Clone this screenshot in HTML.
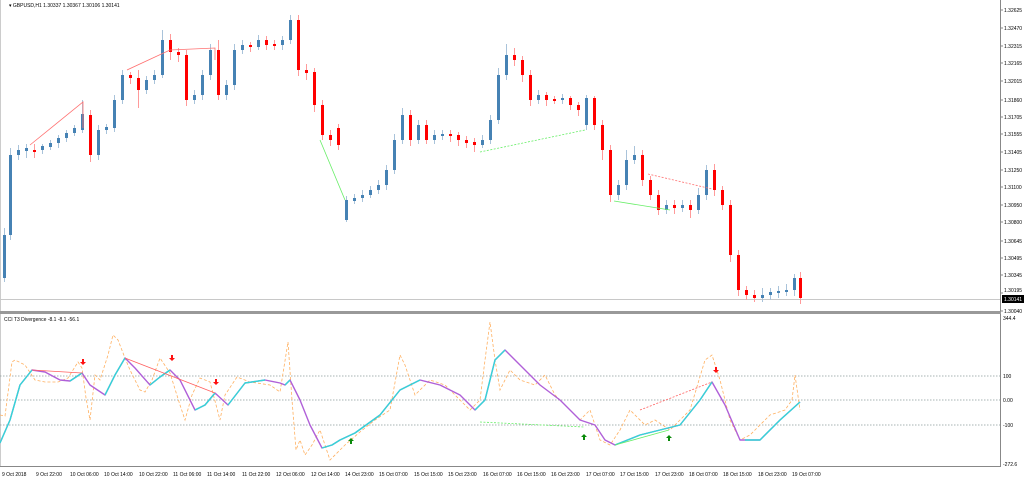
<!DOCTYPE html>
<html><head><meta charset="utf-8"><style>
html,body{margin:0;padding:0;background:#fff;width:1024px;height:480px;overflow:hidden}
svg text{font-family:"Liberation Sans",sans-serif;font-size:5px;fill:#000}
</style></head><body>
<svg width="1024" height="480" xmlns="http://www.w3.org/2000/svg">
<defs><clipPath id="ind"><rect x="0" y="315" width="1000" height="151"/></clipPath></defs>
<rect x="0" y="0" width="1024" height="480" fill="#fff"/>
<line x1="1000.5" y1="0" x2="1000.5" y2="466" stroke="#888"/>
<line x1="0.5" y1="0" x2="0.5" y2="466" stroke="#ccc"/>
<rect x="0" y="311" width="1001" height="3" fill="#999"/>
<line x1="0" y1="466.5" x2="1001" y2="466.5" stroke="#888"/>
<line x1="0" y1="299.5" x2="1000" y2="299.5" stroke="#c8c8c8"/>
<text x="9" y="7" style="font-size:5px">▾ GBPUSD,H1  1.30337 1.30367 1.30106 1.30141</text>
<text x="4" y="321" style="font-size:5px">CCI T3 Divergence -8.1 -8.1 -56.1</text>
<g stroke="#888">
<line x1="1000" y1="10" x2="1003" y2="10"/><line x1="1000" y1="28" x2="1003" y2="28"/><line x1="1000" y1="46" x2="1003" y2="46"/><line x1="1000" y1="63" x2="1003" y2="63"/><line x1="1000" y1="81" x2="1003" y2="81"/><line x1="1000" y1="100" x2="1003" y2="100"/><line x1="1000" y1="117" x2="1003" y2="117"/><line x1="1000" y1="134" x2="1003" y2="134"/><line x1="1000" y1="152" x2="1003" y2="152"/><line x1="1000" y1="170" x2="1003" y2="170"/><line x1="1000" y1="187" x2="1003" y2="187"/><line x1="1000" y1="205" x2="1003" y2="205"/><line x1="1000" y1="222" x2="1003" y2="222"/><line x1="1000" y1="241" x2="1003" y2="241"/><line x1="1000" y1="258" x2="1003" y2="258"/><line x1="1000" y1="275" x2="1003" y2="275"/><line x1="1000" y1="293" x2="1003" y2="293"/><line x1="1000" y1="311" x2="1003" y2="311"/>
</g>
<text x="1004" y="12">1.32625</text><text x="1004" y="30">1.32470</text><text x="1004" y="48">1.32315</text><text x="1004" y="65">1.32165</text><text x="1004" y="83">1.32015</text><text x="1004" y="102">1.31860</text><text x="1004" y="119">1.31705</text><text x="1004" y="136">1.31555</text><text x="1004" y="154">1.31405</text><text x="1004" y="172">1.31250</text><text x="1004" y="189">1.31100</text><text x="1004" y="207">1.30950</text><text x="1004" y="224">1.30800</text><text x="1004" y="243">1.30645</text><text x="1004" y="260">1.30495</text><text x="1004" y="277">1.30345</text><text x="1004" y="292">1.30195</text><text x="1004" y="313">1.30040</text>
<rect x="1002" y="295" width="22" height="8" fill="#000"/><text x="1004" y="301" style="fill:#fff">1.30141</text>
<g stroke="#8a9a9a" stroke-dasharray="1.5,1.5" stroke-width="0.8">
<line x1="0" y1="376" x2="1000" y2="376"/><line x1="0" y1="400" x2="1000" y2="400"/><line x1="0" y1="425" x2="1000" y2="425"/></g>
<text x="1003" y="378">100</text><text x="1003" y="402">0.00</text><text x="1003" y="427">-100</text><text x="1003" y="320">344.4</text><text x="1003" y="466">-272.6</text>
<g style="font-size:4.6px">
<text x="2" y="476">9 Oct 2018</text><text x="36" y="476">9 Oct 22:00</text><text x="70" y="476">10 Oct 06:00</text><text x="104" y="476">10 Oct 14:00</text><text x="139" y="476">10 Oct 22:00</text><text x="173" y="476">11 Oct 06:00</text><text x="207" y="476">11 Oct 14:00</text><text x="242" y="476">11 Oct 22:00</text><text x="276" y="476">12 Oct 06:00</text><text x="311" y="476">12 Oct 14:00</text><text x="345" y="476">14 Oct 23:00</text><text x="379" y="476">15 Oct 07:00</text><text x="414" y="476">15 Oct 15:00</text><text x="448" y="476">15 Oct 23:00</text><text x="483" y="476">16 Oct 07:00</text><text x="517" y="476">16 Oct 15:00</text><text x="551" y="476">16 Oct 23:00</text><text x="586" y="476">17 Oct 07:00</text><text x="620" y="476">17 Oct 15:00</text><text x="655" y="476">17 Oct 23:00</text><text x="689" y="476">18 Oct 07:00</text><text x="723" y="476">18 Oct 15:00</text><text x="758" y="476">18 Oct 23:00</text><text x="792" y="476">19 Oct 07:00</text>
</g>
<g stroke="#a9c3da" stroke-width="1">
<path d="M4.5 228V282M10.5 148V240M18.5 145V160M26.5 144V158M42.5 144V154M50.5 140V150M58.5 135V148M66.5 130V142M74.5 125V136M82.5 100V133M98.5 125V160M106.5 124V134M114.5 95V132M122.5 70V104M146.5 76V94M154.5 70V84M162.5 30V78M194.5 90V104M202.5 70V100M210.5 44V80M226.5 80V100M234.5 44V90M242.5 40V54M258.5 35V50M282.5 36V50M290.5 15V44M346.5 196V222M354.5 194V204M362.5 190V202M370.5 186V198M378.5 180V194M386.5 165V190M394.5 134V174M402.5 108V144M418.5 120V144M434.5 130V144M442.5 130V140M482.5 135V148M490.5 115V144M498.5 68V124M506.5 44V80M538.5 90V104M562.5 94V104M586.5 95V130M618.5 180V200M626.5 150V190M634.5 146V164M666.5 200V214M682.5 200V212M698.5 188V214M706.5 165V200M762.5 288V302M770.5 288V300M778.5 286V298M786.5 284V296M794.5 274V296"/></g>
<g fill="#4682b4">
<rect x="3" y="235" width="3" height="43"/><rect x="9" y="155" width="3" height="80"/><rect x="17" y="150" width="3" height="5"/><rect x="25" y="148" width="3" height="3"/><rect x="41" y="146" width="3" height="4"/><rect x="49" y="143" width="3" height="4"/><rect x="57" y="138" width="3" height="5"/><rect x="65" y="133" width="3" height="5"/><rect x="73" y="128" width="3" height="5"/><rect x="81" y="114" width="3" height="16"/><rect x="97" y="130" width="3" height="25"/><rect x="105" y="127" width="3" height="3"/><rect x="113" y="100" width="3" height="28"/><rect x="121" y="75" width="3" height="25"/><rect x="145" y="80" width="3" height="10"/><rect x="153" y="75" width="3" height="5"/><rect x="161" y="40" width="3" height="35"/><rect x="193" y="95" width="3" height="5"/><rect x="201" y="75" width="3" height="20"/><rect x="209" y="50" width="3" height="25"/><rect x="225" y="85" width="3" height="10"/><rect x="233" y="50" width="3" height="35"/><rect x="241" y="45" width="3" height="5"/><rect x="257" y="40" width="3" height="7"/><rect x="281" y="40" width="3" height="5"/><rect x="289" y="20" width="3" height="20"/><rect x="345" y="200" width="3" height="20"/><rect x="353" y="198" width="3" height="3"/><rect x="361" y="195" width="3" height="3"/><rect x="369" y="190" width="3" height="5"/><rect x="377" y="185" width="3" height="5"/><rect x="385" y="170" width="3" height="15"/><rect x="393" y="140" width="3" height="30"/><rect x="401" y="115" width="3" height="25"/><rect x="417" y="125" width="3" height="15"/><rect x="433" y="135" width="3" height="5"/><rect x="441" y="134" width="3" height="2"/><rect x="481" y="140" width="3" height="5"/><rect x="489" y="120" width="3" height="20"/><rect x="497" y="75" width="3" height="45"/><rect x="505" y="55" width="3" height="20"/><rect x="537" y="95" width="3" height="5"/><rect x="561" y="98" width="3" height="2"/><rect x="585" y="98" width="3" height="27"/><rect x="617" y="185" width="3" height="10"/><rect x="625" y="160" width="3" height="25"/><rect x="633" y="155" width="3" height="5"/><rect x="665" y="205" width="3" height="5"/><rect x="681" y="205" width="3" height="3"/><rect x="697" y="195" width="3" height="15"/><rect x="705" y="170" width="3" height="25"/><rect x="761" y="295" width="3" height="3"/><rect x="769" y="292" width="3" height="3"/><rect x="777" y="291" width="3" height="2"/><rect x="785" y="290" width="3" height="2"/><rect x="793" y="278" width="3" height="12"/>
</g>
<g stroke="#ff9a9a" stroke-width="1">
<path d="M34.5 144V158M90.5 110V162M130.5 72V84M138.5 70V108M170.5 34V60M178.5 48V62M186.5 50V106M218.5 40V100M250.5 42V52M266.5 36V50M274.5 40V50M298.5 15V76M306.5 64V80M314.5 68V112M322.5 100V140M330.5 130V146M338.5 124V150M410.5 110V146M426.5 120V144M450.5 130V142M458.5 132V146M466.5 136V148M474.5 138V152M514.5 48V66M522.5 56V82M530.5 70V106M546.5 92V106M554.5 96V104M570.5 96V110M578.5 102V116M594.5 96V130M602.5 120V160M610.5 145V202M642.5 150V186M650.5 176V200M658.5 190V215M674.5 200V214M690.5 200V218M714.5 164V196M722.5 186V210M730.5 200V262M738.5 250V296M746.5 286V300M754.5 290V302M800.5 272V304"/></g>
<g fill="#ff0000">
<rect x="33" y="150" width="3" height="2"/><rect x="89" y="115" width="3" height="40"/><rect x="129" y="75" width="3" height="3"/><rect x="137" y="78" width="3" height="12"/><rect x="169" y="40" width="3" height="12"/><rect x="177" y="52" width="3" height="3"/><rect x="185" y="55" width="3" height="45"/><rect x="217" y="50" width="3" height="45"/><rect x="249" y="45" width="3" height="2"/><rect x="265" y="40" width="3" height="5"/><rect x="273" y="44" width="3" height="2"/><rect x="297" y="20" width="3" height="50"/><rect x="305" y="70" width="3" height="3"/><rect x="313" y="72" width="3" height="33"/><rect x="321" y="105" width="3" height="30"/><rect x="329" y="135" width="3" height="5"/><rect x="337" y="128" width="3" height="17"/><rect x="409" y="115" width="3" height="25"/><rect x="425" y="125" width="3" height="15"/><rect x="449" y="134" width="3" height="2"/><rect x="457" y="135" width="3" height="5"/><rect x="465" y="140" width="3" height="3"/><rect x="473" y="142" width="3" height="3"/><rect x="513" y="55" width="3" height="5"/><rect x="521" y="60" width="3" height="15"/><rect x="529" y="75" width="3" height="25"/><rect x="545" y="95" width="3" height="5"/><rect x="553" y="99" width="3" height="2"/><rect x="569" y="98" width="3" height="7"/><rect x="577" y="105" width="3" height="5"/><rect x="593" y="98" width="3" height="27"/><rect x="601" y="125" width="3" height="25"/><rect x="609" y="150" width="3" height="45"/><rect x="641" y="155" width="3" height="25"/><rect x="649" y="180" width="3" height="15"/><rect x="657" y="195" width="3" height="15"/><rect x="673" y="205" width="3" height="3"/><rect x="689" y="205" width="3" height="5"/><rect x="713" y="170" width="3" height="20"/><rect x="721" y="190" width="3" height="15"/><rect x="729" y="205" width="3" height="50"/><rect x="737" y="255" width="3" height="35"/><rect x="745" y="290" width="3" height="5"/><rect x="753" y="295" width="3" height="3"/><rect x="799" y="278" width="3" height="20"/>
</g>
<g fill="none" stroke-width="0.8">
<polyline points="30,145 83,102 83,128" stroke="#ff7070"/>
<polyline points="127,70 170,50 215,48 215,60" stroke="#ff7070"/>
<line x1="320" y1="140" x2="345" y2="200" stroke="#66ee66"/>
<line x1="480" y1="152" x2="585" y2="130" stroke="#66ee66" stroke-dasharray="2,1.5"/>
<line x1="614" y1="201" x2="670" y2="210" stroke="#66ee66"/>
<line x1="648" y1="174" x2="712" y2="189" stroke="#ff7070" stroke-dasharray="2,1.5"/>
</g>
<g clip-path="url(#ind)">
<polyline fill="none" stroke="#ffb060" stroke-width="0.8" stroke-dasharray="3,2" points="0,415 5,416 12,362 15,360 25,365 35,380 45,382 58,382 68,378 78,362 82,368 86,398 90,420 95,375 100,380 108,355 113,335 118,340 125,358 130,370 140,390 145,392 152,380 160,358 170,373 180,405 185,420 192,395 200,378 210,382 220,420 225,395 237,377 250,382 270,385 280,392 288,342 292,400 296,450 300,440 305,455 312,445 320,430 330,460 345,445 360,432 375,420 390,410 400,355 405,365 415,395 430,380 445,385 460,400 470,410 480,400 485,360 490,322 495,360 500,390 510,370 520,380 535,385 545,375 555,395 565,405 580,420 590,410 600,440 610,445 620,430 630,410 645,425 655,420 670,430 690,410 705,360 712,355 720,380 730,420 740,440 750,435 770,415 785,410 792,400 795,375 800,410"/>
</g>
<polyline fill="none" stroke="#b060d8" stroke-width="1.4" stroke-linejoin="round" points="0,443 10,420 20,385 32,370 45,372 60,380 70,381 82,373 90,385 105,395 115,375 125,358 135,368 150,385 160,377 170,370 180,380 195,410 205,405 215,393 228,405 245,383 265,380 280,383 285,385 290,380 300,400 310,425 322,448 332,445 340,440 355,433 380,415 400,390 420,380 440,385 460,395 475,410 485,400 495,360 505,350 520,365 540,385 560,400 580,420 595,425 605,440 615,445 640,435 660,430 680,425 700,400 712,382 725,405 740,440 760,440 780,420 800,402"/>
<g fill="none" stroke="#33d6d6" stroke-width="1.4" stroke-linejoin="round">
<polyline points="0,443 10,420 20,385 32,370"/><polyline points="70,381 82,373"/><polyline points="105,395 115,375 125,358"/><polyline points="150,385 160,377 170,370"/><polyline points="195,410 205,405 215,393"/><polyline points="228,405 245,383 265,380"/><polyline points="285,385 290,380"/><polyline points="322,448 332,445 340,440 355,433 380,415 400,390 420,380"/><polyline points="475,410 485,400 495,360 505,350"/><polyline points="615,445 640,435 660,430 680,425 700,400 712,382"/><polyline points="745,440 760,440 780,420 800,402"/>
</g>
<g fill="none" stroke-width="0.8">
<line x1="32" y1="370" x2="82" y2="373" stroke="#ff6060"/><line x1="125" y1="358" x2="215" y2="393" stroke="#ff6060"/>
<line x1="480" y1="422" x2="584" y2="427" stroke="#66ee66" stroke-dasharray="2,1.5"/><line x1="615" y1="445" x2="669" y2="430" stroke="#66ee66"/><line x1="640" y1="410" x2="712" y2="382" stroke="#ff6060" stroke-dasharray="2,1.5"/>
</g>
<g fill="#ff1010">
<path d="M82 359h2v3h2l-3 3l-3-3h2z"/><path d="M171 355h2v3h2l-3 3l-3-3h2z"/><path d="M215 379h2v3h2l-3 3l-3-3h2z"/><path d="M715 367h2v3h2l-3 3l-3-3h2z"/>
</g>
<g fill="#0a8a0a">
<path d="M350 444h2v-3h2l-3-3l-3 3h2z"/><path d="M583 440h2v-3h2l-3-3l-3 3h2z"/><path d="M668 441h2v-3h2l-3-3l-3 3h2z"/>
</g>
</svg>
</body></html>
